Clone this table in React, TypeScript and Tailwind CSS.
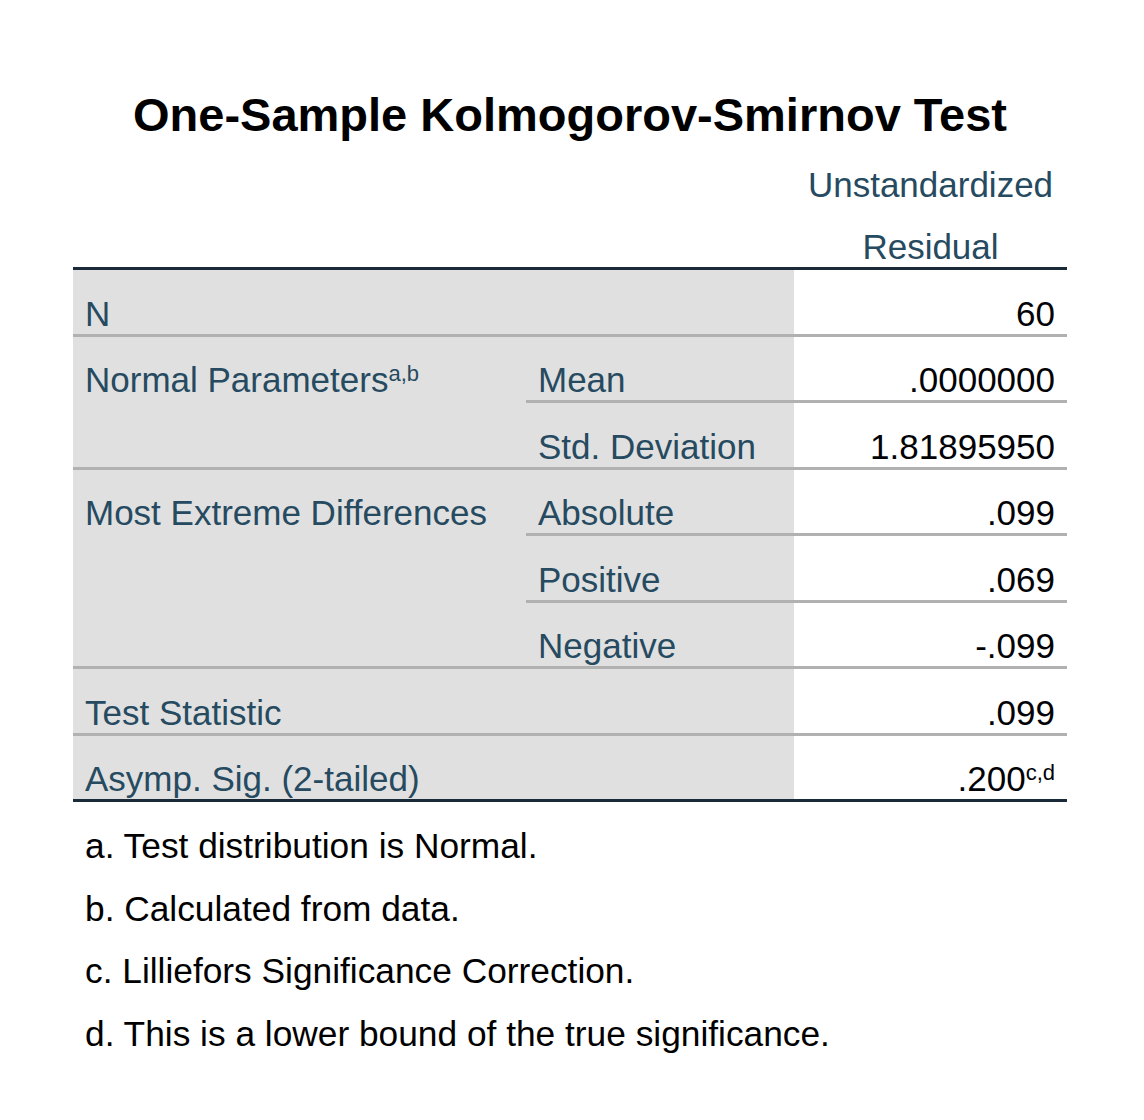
import React from 'react'

const LABEL = 'text-[#264a60]'
const VALUE = 'text-[#010205]'
const GRAY = 'bg-[#e0e0e0]'
const LINE = 'border-b-[3px] border-[#b1b1b1]'
const DARK = 'border-b-[3px] border-[#1b2a38]'

type CellProps = {
  children?: React.ReactNode
  className?: string
}

const Label: React.FC<CellProps> = ({ children, className = '' }) => (
  <div className={`${GRAY} ${className}`}>
    <div className={`h-[63.5px] flex items-end pl-[12px] leading-[40px] ${LABEL}`}>{children}</div>
  </div>
)

const Value: React.FC<CellProps> = ({ children, className = '' }) => (
  <div className={`h-[66.5px] flex items-end justify-end pr-[12px] leading-[40px] bg-white ${VALUE} ${className}`}>
    {children}
  </div>
)

const Sup: React.FC<CellProps> = ({ children }) => <sup className="text-[22px]">{children}</sup>

export default function App() {
  return (
    <div className="w-[1144px] min-h-[1120px] bg-white" style={{ fontFamily: '"Liberation Sans", Arial, sans-serif' }}>
      <div className="ml-[73px] w-[994px] pt-[88px]">
        <h1 className="text-center text-[47px] leading-[54px] font-bold text-black">One-Sample Kolmogorov-Smirnov Test</h1>

        <div className="text-[35px]">
          <div className="grid grid-cols-[453px_268px_273px]">
            <div className="col-span-2" />
            <div className={`mt-[23px] flex flex-col items-center gap-[22px] leading-[40px] ${LABEL}`}>
              <div>Unstandardized</div>
              <div>Residual</div>
            </div>
          </div>

          <div className="grid grid-cols-[453px_268px_273px] border-t-[3px] border-[#1b2a38]">
            <Label className={`col-span-2 ${LINE}`}>N</Label>
            <Value className={LINE}>60</Value>

            <Label className={`row-span-2 ${LINE}`}>
              <span>
                Normal Parameters<Sup>a,b</Sup>
              </span>
            </Label>
            <Label className={LINE}>Mean</Label>
            <Value className={LINE}>.0000000</Value>
            <Label className={LINE}>Std. Deviation</Label>
            <Value className={LINE}>1.81895950</Value>

            <Label className={`row-span-3 ${LINE}`}>Most Extreme Differences</Label>
            <Label className={LINE}>Absolute</Label>
            <Value className={LINE}>.099</Value>
            <Label className={LINE}>Positive</Label>
            <Value className={LINE}>.069</Value>
            <Label className={LINE}>Negative</Label>
            <Value className={LINE}>-.099</Value>

            <Label className={`col-span-2 ${LINE}`}>Test Statistic</Label>
            <Value className={LINE}>.099</Value>

            <Label className={`col-span-2 ${DARK}`}>Asymp. Sig. (2-tailed)</Label>
            <Value className={DARK}>
              <span>
                .200<Sup>c,d</Sup>
              </span>
            </Value>
          </div>

          <div className="mt-[13px] pl-[12px] text-[35.3px] leading-[62.5px] text-black">
            <div>a. Test distribution is Normal.</div>
            <div>b. Calculated from data.</div>
            <div>c. Lilliefors Significance Correction.</div>
            <div>d. This is a lower bound of the true significance.</div>
          </div>
        </div>
      </div>
    </div>
  )
}
